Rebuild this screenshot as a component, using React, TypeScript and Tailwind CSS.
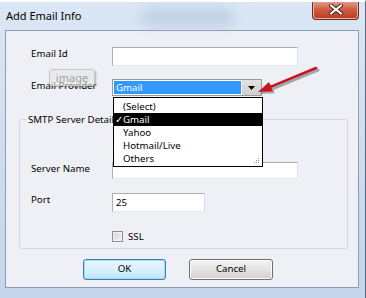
import React from "react";

function Field({ w, h, value }: { w: string; h: string; value?: string }) {
  return (
    <div className={`${w} ${h} bg-white border border-[#abadb3] border-b-[#e3e9ef] border-r-[#dbdfe6] flex items-center pl-[3px] leading-[13px]`}>
      {value}
    </div>
  );
}

function WinButton({ label, focused = false }: { label: string; focused?: boolean }) {
  return (
    <div
      className={
        focused
          ? "w-[83px] h-[21px] rounded-[3px] border border-[#3c7fb1] bg-gradient-to-b from-[#eaf6fd] via-[#d9f0fc] to-[#bee6fd] shadow-[inset_0_0_0_1px_#a7d9f5] flex items-center justify-center"
          : "w-[84px] h-[21px] rounded-[3px] border border-[#707070] bg-gradient-to-b from-[#f2f2f2] via-[#e4e4e4] to-[#cfcfcf] shadow-[inset_0_0_0_1px_#fbfbfb] flex items-center justify-center"
      }
    >
      {label}
    </div>
  );
}

const providers = ["(Select)", "Gmail", "Yahoo", "Hotmail/Live", "Others"];

export default function App() {
  return (
    <div className="relative w-[366px] h-[298px] overflow-hidden bg-gradient-to-b from-[#dbe7f5] via-[#cddcef] to-[#c4d6ec] border-t-2 border-t-white border-r border-r-[#55657a] font-['Noto_Sans',sans-serif] text-[9.7px] text-black">
      {/* glass blur behind title bar */}
      <div className="absolute left-[140px] top-[6px] w-[95px] h-[18px] rounded-full bg-[#a9bfd8] opacity-50 blur-[6px]" />

      {/* title bar */}
      <div className="relative flex h-[28px] items-start">
        <div className="flex-1 pl-[6px] pt-[6px] text-[11px] leading-[15px]">Add Email Info</div>
        <div className="mr-[6px] -mt-[2px] w-[47px] h-[20px] rounded-b-[4px] border border-t-0 border-[#6b2b22] bg-gradient-to-b from-[#e9a899] via-[#cf5b42] to-[#b83a20] shadow-[inset_0_0_0_1px_#ecb1a3] flex items-center justify-center">
          <svg width="14" height="11" viewBox="0 0 14 11">
            <path d="M2 1.5 L12 9.5 M12 1.5 L2 9.5" stroke="#4a1f1a" strokeWidth="4" strokeLinecap="round" />
            <path d="M2 1.5 L12 9.5 M12 1.5 L2 9.5" stroke="#ffffff" strokeWidth="2.2" strokeLinecap="round" />
          </svg>
        </div>
      </div>

      {/* client area */}
      <div className="ml-[5px] w-[354px] h-[258px] border border-[#8c9db4] bg-[#eef0f6] flex flex-col">
        <div className="mt-[16px] flex items-start pl-[25px]">
          <div className="w-[81px] leading-[13px]">Email Id</div>
          <Field w="w-[186px]" h="h-[19px]" />
        </div>

        <div className="mt-[13px] flex items-start pl-[25px]">
          <div className="w-[81px] leading-[13px]">Email Provider</div>
          <div className="w-[150px] h-[17px] border border-[#9a9a9a] bg-white flex">
            <div className="flex-1 m-px bg-[#3399ff] text-white leading-[13px] pl-[2px]">Gmail</div>
            <div className="w-[19px] bg-gradient-to-b from-[#e2e2e2] to-[#cfcfcf] flex items-center justify-center">
              <svg width="7" height="4" viewBox="0 0 7 4">
                <path d="M0 0 H7 L3.5 4 Z" fill="#000" />
              </svg>
            </div>
          </div>
        </div>

        <fieldset className="mt-[17px] ml-[13px] w-[329px] border border-[#d0d7e0] rounded-[3px] pb-[6px]">
          <legend className="ml-[7px] px-[1px] leading-[13px]">SMTP Server Details</legend>
          <div className="pl-[11px]">
            <div className="mt-[36px] flex items-start">
              <div className="w-[81px] leading-[13px]">Server Name</div>
              <Field w="w-[186px]" h="h-[17px]" />
            </div>
            <div className="mt-[14px] flex items-start">
              <div className="w-[81px] leading-[13px]">Port</div>
              <Field w="w-[93px]" h="h-[19px]" value="25" />
            </div>
            <div className="mt-[19px] flex items-center pl-[81px] gap-[5px]">
              <div className="w-[11px] h-[11px] border border-[#8e8f8f] bg-gradient-to-br from-[#d3d3d3] to-[#f8f8f8] shadow-[inset_0_0_0_1px_#f4f4f4]" />
              <div className="leading-[11px]">SSL</div>
            </div>
          </div>
        </fieldset>

        <div className="mt-[10px] flex ml-[77px] gap-[23px]">
          <WinButton label="OK" focused />
          <WinButton label="Cancel" />
        </div>
      </div>

      {/* ghost "image" tag over the label */}
      <div className="absolute left-[49px] top-[67px] w-[46px] h-[17px] rounded-[3px] border border-[#c6c6c6] bg-[#e4e4e4]/60 shadow-[1px_1px_2px_rgba(0,0,0,0.25)] text-[11px] leading-[15px] text-[#a3a3a3] flex justify-center">
        image
      </div>

      {/* open dropdown list */}
      <div className="absolute left-[113px] top-[95px] w-[150px] border border-black bg-white pt-[2px] pb-[1px]">
        {providers.map((p) => (
          <div
            key={p}
            className={
              p === "Gmail"
                ? "relative h-[13px] leading-[13px] pl-[9px] bg-black text-white"
                : "relative h-[13px] leading-[13px] pl-[9px]"
            }
          >
            {p === "Gmail" && <span className="absolute left-[1px] top-0">✓</span>}
            {p}
          </div>
        ))}
        <svg className="absolute right-[2px] bottom-[2px]" width="7" height="7" viewBox="0 0 7 7">
          <rect x="5" y="1" width="1" height="1" fill="#9a9a9a" />
          <rect x="3" y="3" width="1" height="1" fill="#9a9a9a" />
          <rect x="5" y="3" width="1" height="1" fill="#9a9a9a" />
          <rect x="1" y="5" width="1" height="1" fill="#9a9a9a" />
          <rect x="3" y="5" width="1" height="1" fill="#9a9a9a" />
          <rect x="5" y="5" width="1" height="1" fill="#9a9a9a" />
        </svg>
      </div>

      {/* red arrow callout */}
      <svg className="absolute left-[250px] top-[56px]" width="75" height="42" viewBox="0 0 75 42">
        <g transform="translate(2,2)" opacity="0.3">
          <path d="M66 10 L21 28.6" stroke="#000" strokeWidth="3" strokeLinecap="round" />
          <path d="M8 34 L22.8 33.3 L19 24 Z" fill="#000" />
        </g>
        <path d="M66 10 L21 28.6" stroke="#c4161c" strokeWidth="2.6" strokeLinecap="round" />
        <path d="M8 34 L22.8 33.3 L19 24 Z" fill="#c4161c" />
      </svg>
    </div>
  );
}
